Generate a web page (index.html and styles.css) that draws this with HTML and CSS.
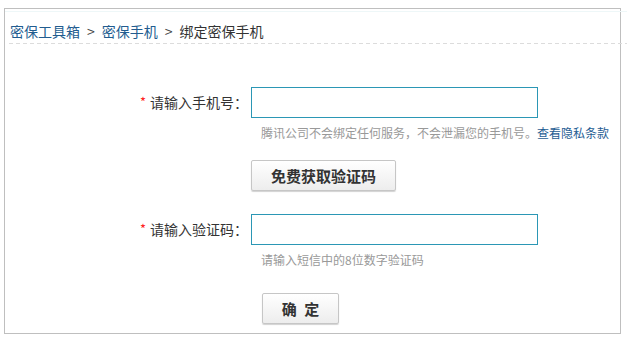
FILE: index.html
```html
<!DOCTYPE html>
<html lang="zh-CN">
<head>
  <meta charset="UTF-8" />
  <title>绑定密保手机</title>
  <link rel="stylesheet" href="styles.css">
</head>
<body>

<div class="panel">
  <div class="crumbs">
    <a href="#">密保工具箱</a><span class="sep">&gt;</span><a href="#">密保手机</a><span class="sep">&gt;</span><span class="current">绑定密保手机</span>
  </div>

  <form class="bind-form" onsubmit="return false">
    <div class="form-row first">
      <label class="label" for="mobile"><em>*</em>请输入手机号：</label>
      <div class="field">
        <input type="text" id="mobile" class="text-input">
        <p class="hint">腾讯公司不会绑定任何服务，不会泄漏您的手机号。<a href="#">查看隐私条款</a></p>
      </div>
    </div>

    <div class="form-row">
      <span class="label"></span>
      <div class="field"><button type="button" class="btn btn-code">免费获取验证码</button></div>
    </div>

    <div class="form-row second">
      <label class="label" for="code"><em>*</em>请输入验证码：</label>
      <div class="field">
        <input type="text" id="code" class="text-input">
        <p class="hint">请输入短信中的8位数字验证码</p>
      </div>
    </div>

    <div class="form-row">
      <span class="label"></span>
      <div class="field"><button type="submit" class="btn btn-ok">确 定</button></div>
    </div>
  </form>
</div>

</body>
</html>
```

FILE: styles.css
```css
body { margin: 0; padding: 8px 0 0 4px; background: #fff; color: #333; font-family: "Noto Sans CJK SC", "Noto Sans", sans-serif; font-size: 14px; }
a { color: #225c8f; text-decoration: none; }

.panel { box-sizing: border-box; width: 617px; height: 326px; border: 1px solid #bfbfbf; }

/* breadcrumb */
.crumbs { width: 622px; margin-top: 2px; border-top: 1px solid #eef7f8; padding: 9px 0 2px 5px; line-height: 20px; font-size: 14px; }
.crumbs::after { content: ""; display: block; height: 1px; margin: 2px 0 0 -1px; background: repeating-linear-gradient(to right, #dcdcdc 0 4px, transparent 4px 7px); }
.crumbs .sep { color: #444; margin: 0 7px; }
.crumbs .current { color: #333; }

/* form */
.bind-form { padding-top: 41px; }
.form-row { display: flex; align-items: flex-start; }
.form-row .label { width: 243px; margin-right: 3px; text-align: right; line-height: 31px; font-size: 14px; color: #333; }
.form-row .label em { font-style: normal; color: #f22; font-size: 13px; margin-right: 4px; position: relative; top: -1px; }
.field { display: flex; flex-direction: column; align-items: flex-start; }

.text-input { box-sizing: border-box; width: 287px; height: 31px; margin: 0; border: 1px solid #2b97b5; padding: 0 6px; outline: none; font-size: 14px; }
.hint { margin: 6px 0 0; padding-left: 10px; line-height: 18px; font-size: 12px; color: #999; }
.hint a { color: #1f5d93; }

.btn {
  box-sizing: border-box; height: 31px; border: 1px solid #c6c6c6; border-radius: 2px; padding: 0;
  background: linear-gradient(#ffffff, #ededed); box-shadow: 0 1px 1px rgba(0,0,0,0.18);
  font-family: inherit; font-size: 15px; font-weight: bold; color: #333; cursor: pointer;
}
.btn:hover { background: linear-gradient(#ffffff, #e2e2e2); }
.btn-code { width: 145px; margin-top: 18px; }
.btn-ok { width: 77px; margin: 24px 0 0 11px; word-spacing: 4px; }
.form-row.second { margin-top: 23px; }
```
